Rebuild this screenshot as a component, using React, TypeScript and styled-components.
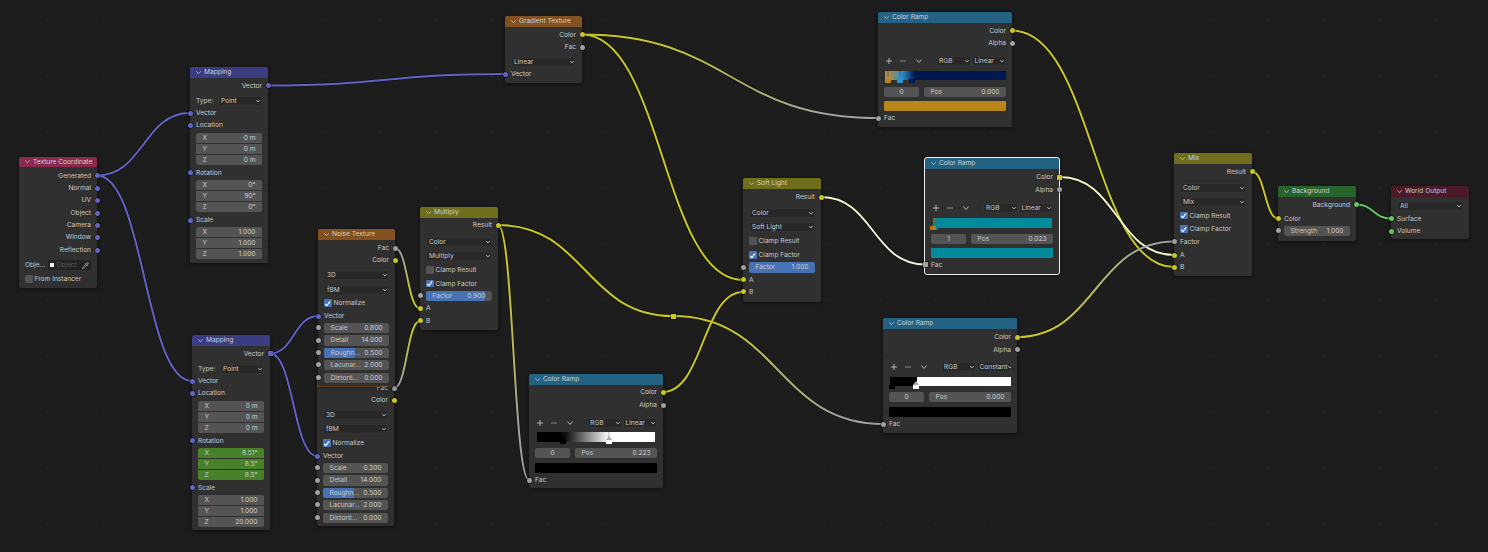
import React from 'react';
import styled, { createGlobalStyle } from 'styled-components';
import { Pipette } from 'lucide-react';

const GlobalStyle = createGlobalStyle`
  html, body { margin: 0; padding: 0; background: #1d1d1d; }
  * { box-sizing: border-box; }
`;

const VEC = '#6363c7';
const COL = '#c7c729';
const VAL = '#a1a1a1';
const SHD = '#63c763';

const Canvas = styled.div`
  position: relative;
  width: 1488px;
  height: 552px;
  overflow: hidden;
  background-color: #1d1d1d;
  background-image: radial-gradient(circle at center, #242424 0.9px, transparent 1.2px);
  background-size: 55.5px 56px;
  background-position: 20px -8px;
  font-family: Inter, "Noto Sans", sans-serif;
  font-size: 6.6px;
  color: #c8c8c8;
`;
const WireLayer = styled.svg`
  position: absolute;
  left: 0;
  top: 0;
`;
const NodeBox = styled.div<{ $x: number; $y: number; $w: number; $h: number; $sel?: boolean }>`
  position: absolute;
  left: ${p => p.$x}px;
  top: ${p => p.$y}px;
  width: ${p => p.$w}px;
  height: ${p => p.$h}px;
  display: flex;
  flex-direction: column;
  background: #303030;
  border-radius: 2px;
  box-shadow: 0 1px 4px rgba(0, 0, 0, 0.55);
  outline: ${p => (p.$sel ? '1px solid #f0f0f0' : 'none')};
`;
const Header = styled.div<{ $c: string; $h: number }>`
  flex: none;
  height: ${p => p.$h}px;
  display: flex;
  align-items: center;
  gap: 3px;
  padding-left: 6px;
  background: ${p => p.$c};
  border-radius: 2px 2px 0 0;
  color: #d0d0d0;
  white-space: nowrap;
  overflow: hidden;
`;
const Row = styled.div<{ $h: number }>`
  position: relative;
  flex: none;
  height: ${p => p.$h}px;
  display: flex;
  align-items: center;
  padding: 0 6px;
  white-space: nowrap;
`;
const OutRow = styled(Row)`
  justify-content: flex-end;
`;
const Dot = styled.span<{ $c: string; $side: 'l' | 'r'; $sq?: boolean }>`
  position: absolute;
  top: 50%;
  ${p => (p.$side === 'l' ? 'left: -2.5px;' : 'right: -2.5px;')}
  width: 5px;
  height: 5px;
  margin-top: -2.5px;
  border-radius: ${p => (p.$sq ? '0.5px' : '50%')};
  background: ${p => p.$c};
  box-shadow: 0 0 0 0.5px rgba(0, 0, 0, 0.7);
`;
const Drop = styled.div`
  flex: 1;
  min-width: 0;
  height: 100%;
  display: flex;
  align-items: center;
  justify-content: space-between;
  padding: 0 2px 0 3px;
  background: #282828;
  box-shadow: inset 0 0 0 0.6px #3e3e3e;
  border-radius: 2px;
  overflow: hidden;
`;
const FieldLabel = styled.span`
  flex: none;
  width: 22px;
`;
const Field = styled.div<{ $bg: string; $pos: string }>`
  position: relative;
  flex: 1;
  min-width: 0;
  height: 100%;
  display: flex;
  align-items: center;
  justify-content: space-between;
  padding: 0 6.5px;
  background: ${p => p.$bg};
  overflow: hidden;
  border-radius: ${p =>
    p.$pos === 'first' ? '2px 2px 0 0' : p.$pos === 'mid' ? '0' : p.$pos === 'last' ? '0 0 2px 2px' : '2px'};
`;
const Fill = styled.span<{ $pct: number }>`
  position: absolute;
  left: 0;
  top: 0;
  bottom: 0;
  width: ${p => p.$pct}%;
  background: #4772b3;
`;
const FieldName = styled.span`
  position: relative;
`;
const FieldValue = styled.span`
  position: relative;
  color: #d0d0d0;
`;
const CheckBox = styled.span<{ $on: boolean }>`
  flex: none;
  width: 7.5px;
  height: 7.5px;
  margin-right: 2px;
  border-radius: 1px;
  background: ${p => (p.$on ? '#4772b3' : '#545454')};
  display: flex;
  align-items: center;
  justify-content: center;
`;
const ToolRow = styled(Row)`
  gap: 0;
`;
const ToolIcons = styled.div`
  flex: none;
  width: 52px;
  display: flex;
  align-items: center;
  gap: 8px;
  padding-left: 2px;
`;
const ToolChevron = styled.span`
  display: flex;
  margin-left: 2px;
`;
const DropPair = styled.div`
  flex: 1;
  height: 100%;
  display: flex;
  gap: 1px;
`;
const RampBar = styled.div<{ $g: string; $inset: number }>`
  position: relative;
  flex: 1;
  height: 100%;
  margin: 0 ${p => p.$inset}px;
  background: ${p => p.$g};
`;
const HandleMark = styled.svg<{ $pct: number }>`
  position: absolute;
  left: ${p => p.$pct}%;
  top: 0;
  margin-left: -3px;
`;
const PosRow = styled(Row)`
  gap: 5px;
`;
const IndexField = styled.div`
  flex: none;
  width: 35px;
  height: 100%;
  display: flex;
  align-items: center;
  justify-content: center;
  background: #545454;
  border-radius: 2px;
`;
const Swatch = styled.div<{ $c: string }>`
  flex: 1;
  height: 100%;
  background: ${p => p.$c};
  border-radius: 1px;
`;
const ObjectField = styled.div`
  flex: 1;
  height: 100%;
  margin-left: 3px;
  display: flex;
  align-items: center;
  gap: 2px;
  padding: 0 2px;
  background: #222222;
  border-radius: 2px;
  color: #5a5a5a;
  overflow: hidden;
`;
const ObjectMark = styled.span`
  flex: none;
  width: 4px;
  height: 4px;
  background: #efefef;
`;
const ObjectText = styled.span`
  flex: 1;
  overflow: hidden;
`;
const Reroute = styled.span`
  position: absolute;
  left: 671px;
  top: 314px;
  width: 4.5px;
  height: 4.5px;
  background: ${COL};
  box-shadow: 0 0 0 0.5px rgba(0, 0, 0, 0.7);
`;

const Chevron = ({ s = 5, c = '#c8c8c8' }: { s?: number; c?: string }) => (
  <svg width={s} height={s} viewBox="0 0 10 10" style={{ flex: 'none' }}>
    <path d="M1 3 L5 7.5 L9 3" fill="none" stroke={c} strokeWidth={s < 5 ? 2 : 1.5} strokeLinecap="round" strokeLinejoin="round" />
  </svg>
);
const Tick = () => (
  <svg width="7" height="7" viewBox="0 0 10 10">
    <path d="M1.5 5.5 L4 8 L8.8 2" fill="none" stroke="#fff" strokeWidth="1.7" />
  </svg>
);
const Handle = ({ pct, c, active }: { pct: number; c: string; active?: boolean }) => (
  <HandleMark $pct={pct} width="6" height="12" viewBox="0 0 6 12">
    <rect x="2.5" y="0" width="1" height="6" fill={c === '#000000' ? '#444' : '#000'} opacity="0.3" />
    {active && <polygon points="3,4 6,8 0,8" fill={c === '#ffffff' ? '#aaa' : c} />}
    <rect x="0" y="8" width="6" height="4" fill={c} />
  </HandleMark>
);

type RowDef =
  | { k: 'out' | 'in'; y: number; t: string; c: string; sq?: boolean }
  | { k: 'drop'; y: number; t: string; label?: string; chev?: boolean }
  | { k: 'num'; y: number; n: string; v: string; pos?: string; bg?: string; fill?: number; dot?: string }
  | { k: 'check'; y: number; t: string; on: boolean }
  | { k: 'tool'; y: number; a: string; b: string }
  | { k: 'bar'; y: number; h: number; g: string; inset: number; hs: { pct: number; c: string; active?: boolean }[] }
  | { k: 'pos'; y: number; i: string; v: string }
  | { k: 'swatch'; y: number; c: string; h: number }
  | { k: 'obj'; y: number };

interface NodeDef {
  title: string;
  c: string;
  x: number;
  y: number;
  w: number;
  b: number;
  hh?: number;
  sel?: boolean;
  rows: RowDef[];
}

const xyz = (ys: number[], vs: string[], bg?: string): RowDef[] =>
  ['X', 'Y', 'Z'].map((n, i) => ({
    k: 'num' as const,
    y: ys[i],
    n,
    v: vs[i],
    bg,
    pos: i === 0 ? 'first' : i === 1 ? 'mid' : 'last',
  }));

const out = (y: number, t: string, c: string, sq?: boolean): RowDef => ({ k: 'out', y, t, c, sq });
const inp = (y: number, t: string, c: string, sq?: boolean): RowDef => ({ k: 'in', y, t, c, sq });
const drop = (y: number, t: string): RowDef => ({ k: 'drop', y, t });
const check = (y: number, t: string, on: boolean): RowDef => ({ k: 'check', y, t, on });

const ramp = (
  top: number,
  opts: {
    x: number;
    w?: number;
    b: number;
    sel?: boolean;
    ys: number[];
    interp: string;
    g: string;
    inset?: number;
    hs: { pct: number; c: string; active?: boolean }[];
    idx: string;
    pos: string;
    sw: string;
    sqC?: boolean;
  }
): NodeDef => ({
  title: 'Color Ramp',
  c: '#246283',
  x: opts.x,
  y: top,
  w: opts.w ?? 134,
  b: opts.b,
  sel: opts.sel,
  rows: [
    out(opts.ys[0], 'Color', COL, opts.sqC),
    out(opts.ys[1], 'Alpha', VAL),
    { k: 'tool', y: opts.ys[2], a: 'RGB', b: opts.interp },
    { k: 'bar', y: opts.ys[3], h: 9.5, g: opts.g, inset: opts.inset ?? 0.5, hs: opts.hs },
    { k: 'pos', y: opts.ys[4], i: opts.idx, v: opts.pos },
    { k: 'swatch', y: opts.ys[5], c: opts.sw, h: 9.5 },
    inp(opts.ys[6], 'Fac', VAL, opts.sqC),
  ],
});

const mixNode = (
  title: string,
  x: number,
  y: number,
  b: number,
  ys: number[],
  mode: string,
  cr: boolean,
  factor: RowDef
): NodeDef => ({
  title,
  c: '#6e6e1d',
  x,
  y,
  w: 78,
  b,
  rows: [
    out(ys[0], 'Result', COL),
    drop(ys[1], 'Color'),
    drop(ys[2], mode),
    check(ys[3], 'Clamp Result', cr),
    check(ys[4], 'Clamp Factor', true),
    factor,
    inp(ys[6], 'A', COL),
    inp(ys[7], 'B', COL),
  ],
});

const mapping = (
  x: number,
  y: number,
  b: number,
  ys: number[],
  rot: string[],
  scale: string[],
  rotBg: string | undefined,
  sq: boolean
): NodeDef => ({
  title: 'Mapping',
  c: '#3c3c83',
  x,
  y,
  w: 78,
  b,
  rows: [
    out(ys[0], 'Vector', VEC, sq),
    { k: 'drop', y: ys[1], t: 'Point', label: 'Type:' },
    inp(ys[2], 'Vector', VEC),
    inp(ys[3], 'Location', VEC),
    ...xyz([ys[4], ys[5], ys[6]], ['0 m', '0 m', '0 m']),
    inp(ys[7], 'Rotation', VEC),
    ...xyz([ys[8], ys[9], ys[10]], rot, rotBg),
    inp(ys[11], 'Scale', VEC),
    ...xyz([ys[12], ys[13], ys[14]], scale),
  ],
});

const noise = (title: string, x: number, y: number, b: number, ys: number[], scale: string): NodeDef => ({
  title,
  c: '#83501f',
  x,
  y,
  w: 77,
  b,
  rows: [
    out(ys[0], 'Fac', VAL),
    out(ys[1], 'Color', COL),
    drop(ys[2], '3D'),
    drop(ys[3], 'fBM'),
    check(ys[4], 'Normalize', true),
    inp(ys[5], 'Vector', VEC),
    { k: 'num', y: ys[6], n: 'Scale', v: scale, dot: VAL },
    { k: 'num', y: ys[7], n: 'Detail', v: '14.000', dot: VAL },
    { k: 'num', y: ys[8], n: 'Roughn...', v: '0.500', dot: VAL, fill: 47 },
    { k: 'num', y: ys[9], n: 'Lacunar...', v: '2.000', dot: VAL },
    { k: 'num', y: ys[10], n: 'Distorti...', v: '0.000', dot: VAL },
  ],
});

const NODES: NodeDef[] = [
  {
    title: 'Texture Coordinate',
    c: '#8a2a4e',
    x: 19,
    y: 156.5,
    w: 78,
    b: 288,
    rows: [
      out(175.5, 'Generated', VEC),
      out(188, 'Normal', VEC),
      out(200, 'UV', VEC),
      out(213, 'Object', VEC),
      out(225, 'Camera', VEC),
      out(237, 'Window', VEC),
      out(250, 'Reflection', VEC),
      { k: 'obj', y: 265 },
      check(279, 'From Instancer', false),
    ],
  },
  mapping(
    190,
    67,
    263,
    [85.5, 100.5, 113, 125, 137.5, 148.5, 159.5, 172.5, 184.5, 195.5, 206.5, 220, 232, 243, 254],
    ['0°', '90°', '0°'],
    ['1.000', '1.000', '1.000'],
    undefined,
    false
  ),
  mapping(
    192,
    335,
    530,
    [353.5, 368.5, 381, 393, 405.5, 416.5, 427.5, 440.5, 452.5, 463.5, 474.5, 487.5, 499.5, 510.5, 521.5],
    ['8.51°', '8.5°', '8.5°'],
    ['1.000', '1.000', '20.000'],
    '#47822a',
    true
  ),
  noise('', 317, 376, 526, [388, 400, 415, 429, 443, 456, 468, 480.5, 493, 505, 518], '0.300'),
  noise('Noise Texture', 318, 229, 386, [248, 260, 275, 290, 303, 316, 328, 340.5, 353, 365, 378], '0.800'),
  mixNode(
    'Multiply',
    420,
    207,
    330,
    [225, 241.5, 255.5, 270, 283.5, 296, 308.5, 321],
    'Multiply',
    false,
    { k: 'num', y: 296, n: 'Factor', v: '0.900', fill: 90, dot: VAL }
  ),
  {
    title: 'Gradient Texture',
    c: '#83501f',
    x: 505,
    y: 16,
    w: 77,
    b: 83,
    rows: [out(34.5, 'Color', COL), out(47, 'Fac', VAL), drop(62, 'Linear'), inp(74, 'Vector', VEC)],
  },
  ramp(12, {
    x: 878,
    b: 127,
    ys: [30.5, 43, 61, 75.5, 91.5, 106, 118],
    interp: 'Linear',
    g: 'linear-gradient(90deg, #b58a45 3%, #2f8fc8 14%, #00184f 25%)',
    hs: [
      { pct: 3, c: '#bd8417' },
      { pct: 13, c: '#2b93cf', active: true },
      { pct: 23, c: '#001a52' },
    ],
    idx: '0',
    pos: '0.000',
    sw: '#b9861a',
  }),
  ramp(158, {
    x: 925,
    b: 274,
    sel: true,
    sqC: true,
    inset: 1.5,
    ys: [177, 189.5, 208, 223, 238.5, 253, 264.5],
    interp: 'Linear',
    g: 'linear-gradient(90deg, #b0803a 0.5%, #008a9c 3%)',
    hs: [
      { pct: 2.3, c: '#008a9c', active: true },
      { pct: 0.6, c: '#b07a12' },
    ],
    idx: '1',
    pos: '0.023',
    sw: '#008a9c',
  }),
  mixNode(
    'Soft Light',
    743,
    178,
    302,
    [197, 212.5, 227, 241, 255, 267.5, 280, 292],
    'Soft Light',
    false,
    { k: 'num', y: 267.5, n: 'Factor', v: '1.000', fill: 100, dot: VAL }
  ),
  mixNode(
    'Mix',
    1174,
    153,
    276,
    [171.5, 188, 202, 215.5, 229, 241.5, 255, 267],
    'Mix',
    true,
    inp(241.5, 'Factor', VAL)
  ),
  {
    title: 'Background',
    c: '#27632a',
    x: 1278,
    y: 186,
    w: 78,
    b: 240.5,
    rows: [
      out(204.5, 'Background', SHD),
      inp(218.5, 'Color', COL),
      { k: 'num', y: 231, n: 'Strength', v: '1.000', dot: VAL },
    ],
  },
  {
    title: 'World Output',
    c: '#4a1a28',
    x: 1391,
    y: 186,
    w: 78,
    b: 239,
    rows: [drop(206, 'All'), inp(218.5, 'Surface', SHD), inp(231, 'Volume', SHD)],
  },
  ramp(374, {
    x: 529,
    b: 488,
    inset: 2,
    ys: [392, 405, 423, 437, 453, 468, 480],
    interp: 'Linear',
    g: 'linear-gradient(90deg, #000 22%, #fff 61%)',
    hs: [
      { pct: 22, c: '#000000' },
      { pct: 61, c: '#ffffff', active: true },
    ],
    idx: '0',
    pos: '0.223',
    sw: '#000000',
  }),
  ramp(318, {
    x: 883,
    b: 433,
    ys: [337, 349.5, 367, 381.5, 397, 412, 424],
    interp: 'Constant',
    g: 'linear-gradient(90deg, #000 22%, #fff 22%)',
    hs: [
      { pct: 2, c: '#000000' },
      { pct: 22, c: '#ffffff', active: true },
    ],
    idx: '0',
    pos: '0.000',
    sw: '#000000',
  }),
];

const HEIGHTS: Record<string, number> = {
  out: 10,
  in: 10,
  drop: 10,
  num: 10.4,
  check: 10,
  tool: 10,
  pos: 10,
  obj: 10,
};

const renderRow = (r: RowDef) => {
  switch (r.k) {
    case 'out':
      return (
        <>
          {r.t}
          <Dot $c={r.c} $side="r" $sq={r.sq} />
        </>
      );
    case 'in':
      return (
        <>
          <Dot $c={r.c} $side="l" $sq={r.sq} />
          {r.t}
        </>
      );
    case 'drop':
      return (
        <>
          {r.label && <FieldLabel>{r.label}</FieldLabel>}
          <Drop>
            <span>{r.t}</span>
            <Chevron s={4} />
          </Drop>
        </>
      );
    case 'num':
      return (
        <>
          {r.dot && <Dot $c={r.dot} $side="l" />}
          <Field $bg={r.bg ?? '#545454'} $pos={r.pos ?? 'solo'}>
            {r.fill !== undefined && <Fill $pct={r.fill} />}
            <FieldName>{r.n}</FieldName>
            <FieldValue>{r.v}</FieldValue>
          </Field>
        </>
      );
    case 'check':
      return (
        <>
          <CheckBox $on={r.on}>{r.on && <Tick />}</CheckBox>
          {r.t}
        </>
      );
    case 'tool':
      return (
        <>
          <ToolIcons>
            <svg width="6" height="6" viewBox="0 0 6 6">
              <path d="M3 0V6M0 3H6" stroke="#d0d0d0" strokeWidth="0.8" />
            </svg>
            <svg width="6" height="6" viewBox="0 0 6 6">
              <path d="M0 3H6" stroke="#a0a0a0" strokeWidth="0.8" />
            </svg>
            <ToolChevron>
              <Chevron s={6} />
            </ToolChevron>
          </ToolIcons>
          <DropPair>
            <Drop>
              <span>{r.a}</span>
              <Chevron s={4} />
            </Drop>
            <Drop>
              <span>{r.b}</span>
              <Chevron s={4} />
            </Drop>
          </DropPair>
        </>
      );
    case 'bar':
      return (
        <RampBar $g={r.g} $inset={r.inset}>
          {r.hs.map((h, i) => (
            <Handle key={i} {...h} />
          ))}
        </RampBar>
      );
    case 'pos':
      return (
        <>
          <IndexField>{r.i}</IndexField>
          <Field $bg="#545454" $pos="solo">
            <FieldName>Pos</FieldName>
            <FieldValue>{r.v}</FieldValue>
          </Field>
        </>
      );
    case 'swatch':
      return <Swatch $c={r.c} />;
    case 'obj':
      return (
        <>
          <span>Obje...</span>
          <ObjectField>
            <ObjectMark />
            <ObjectText>Object</ObjectText>
            <Pipette size={7} color="#cfcfcf" strokeWidth={2} />
          </ObjectField>
        </>
      );
  }
};

const GraphNode = ({ n }: { n: NodeDef }) => {
  const hh = n.hh ?? 10.5;
  let cursor = n.y + hh;
  return (
    <NodeBox $x={n.x} $y={n.y} $w={n.w} $h={n.b - n.y} $sel={n.sel}>
      <Header $c={n.c} $h={hh}>
        <Chevron s={5} />
        {n.title}
      </Header>
      {n.rows.map((r, i) => {
        const h =
          r.k === 'bar' || r.k === 'swatch' ? r.h : r.k === 'num' && r.pos ? 10 : HEIGHTS[r.k];
        const mt = r.y - h / 2 - cursor;
        cursor = r.y + h / 2;
        const Comp = r.k === 'out' ? OutRow : r.k === 'tool' ? ToolRow : r.k === 'pos' ? PosRow : Row;
        return (
          <Comp key={i} $h={h} style={{ marginTop: mt }}>
            {renderRow(r)}
          </Comp>
        );
      })}
    </NodeBox>
  );
};

type W = { a: [number, number]; b: [number, number]; c1: string; c2: string };
const WIRES: W[] = [
  { a: [97, 175.5], b: [190, 113], c1: VEC, c2: VEC },
  { a: [97, 175.5], b: [192, 381], c1: VEC, c2: VEC },
  { a: [267, 85.5], b: [505, 74], c1: VEC, c2: VEC },
  { a: [270, 353.5], b: [318, 316], c1: VEC, c2: VEC },
  { a: [270, 353.5], b: [317, 456], c1: VEC, c2: VEC },
  { a: [582, 34.5], b: [878, 118], c1: COL, c2: VAL },
  { a: [582, 34.5], b: [743, 280], c1: COL, c2: COL },
  { a: [395, 248], b: [420, 308.5], c1: VAL, c2: COL },
  { a: [394, 388], b: [420, 321], c1: VAL, c2: COL },
  { a: [498, 225], b: [529, 480], c1: COL, c2: VAL },
  { a: [498, 225], b: [673, 316], c1: COL, c2: COL },
  { a: [673, 316], b: [883, 424], c1: COL, c2: VAL },
  { a: [663, 392], b: [743, 292], c1: COL, c2: COL },
  { a: [821, 197], b: [925, 264.5], c1: '#f4f4c8', c2: '#f0f0e0' },
  { a: [1012, 30.5], b: [1174, 267], c1: COL, c2: COL },
  { a: [1060, 177], b: [1174, 255], c1: '#f4f4c8', c2: '#f4f4c8' },
  { a: [1017, 337], b: [1174, 241.5], c1: COL, c2: VAL },
  { a: [1252, 171.5], b: [1278, 218.5], c1: COL, c2: COL },
  { a: [1356, 204.5], b: [1391, 218.5], c1: SHD, c2: SHD },
];

const wirePath = (w: W) => {
  const d = Math.abs(w.b[0] - w.a[0]) * 0.5;
  return `M${w.a[0]} ${w.a[1]} C${w.a[0] + d} ${w.a[1]} ${w.b[0] - d} ${w.b[1]} ${w.b[0]} ${w.b[1]}`;
};

const Wires = () => (
  <WireLayer width="1488" height="552" viewBox="0 0 1488 552">
    <defs>
      {WIRES.map((w, i) => (
        <linearGradient key={i} id={`w${i}`} gradientUnits="userSpaceOnUse" x1={w.a[0]} y1={w.a[1]} x2={w.b[0]} y2={w.b[1]}>
          <stop offset="0" stopColor={w.c1} />
          <stop offset="0.15" stopColor={w.c1} />
          <stop offset="0.85" stopColor={w.c2} />
          <stop offset="1" stopColor={w.c2} />
        </linearGradient>
      ))}
    </defs>
    {WIRES.map((w, i) => (
      <path key={`o${i}`} d={wirePath(w)} fill="none" stroke="#000" strokeOpacity="0.5" strokeWidth="3.2" />
    ))}
    {WIRES.map((w, i) => (
      <path key={`c${i}`} d={wirePath(w)} fill="none" stroke={`url(#w${i})`} strokeWidth="2" />
    ))}
  </WireLayer>
);

export default function App() {
  return (
    <>
      <GlobalStyle />
      <Canvas>
        <Wires />
        <Reroute />
        {NODES.map((n, i) => (
          <GraphNode key={i} n={n} />
        ))}
      </Canvas>
    </>
  );
}
